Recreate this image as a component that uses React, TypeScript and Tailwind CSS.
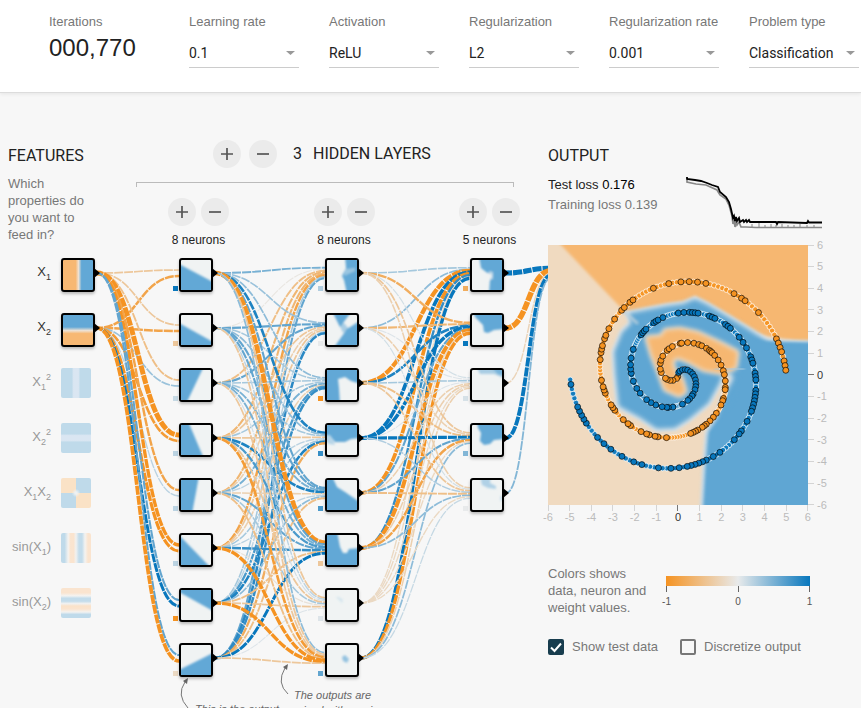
import React, { useState } from "react";

const FEATURE_X = 61;
const LAYER_X = [179, 325, 470];
const ROW_TOP = 258;
const ROW_STEP = 55;
const rowY = (i: number) => ROW_TOP + 15 + ROW_STEP * i;

// Weights are indexed [target][source].
const INPUT_WEIGHTS = [
  [-0.4, -0.8],
  [-0.4, -0.8],
  [-0.5, 0.35],
  [-2.2, -0.9],
  [-0.8, 0.2],
  [-1.3, -1.2],
  [0.6, 1.1],
  [0.6, -1.5],
];

const HIDDEN_WEIGHTS = [
  [0.5, -0.05, -0.5, -0.6, -0.6, -0.8, 0.3, 0.6],
  [0.35, 0.6, 0.6, -0.4, -0.3, -0.4, 0.2, 0.85],
  [0.4, 0.3, 0.3, 0.3, 0.5, -0.3, 0.7, 0.8],
  [0.9, 0.4, 0.3, -0.4, 0.2, 0.3, 0.9, -0.7],
  [0.6, 0.6, 0.5, 0.9, -0.3, 0.2, 0.4, -0.5],
  [-2, 0.6, 0.5, 0.7, 0.6, 0.8, -0.5, 1.1],
  [-0.4, 0.2, 0.1, -0.4, 0.3, -0.1, -0.4, 0.05],
  [0.4, -0.4, -0.4, -0.9, -0.5, -1.3, -1.3, -0.4],
];

const LAST_WEIGHTS = [
  [0.3, 0.4, -1.8, 1.5, -1.5, 0.8, -0.2, 1.3],
  [-0.7, -0.6, 0.9, 1.4, 0.6, -1.7, -0.2, -1.3],
  [0.1, 0.05, 0.3, 0.05, -0.3, -0.3, -0.2, -0.3],
  [-0.4, -0.3, -0.5, 1.2, 0.6, -0.8, -0.2, 0.4],
  [-0.3, 0.1, -0.4, 0.25, -0.5, 0.4, -0.2, 0.15],
];

const OUTPUT_WEIGHTS = [[2.3, -2.5, -0.25, 1.6, 0.45]];

const BIASES = [
  [1, -0.4, 0.15, 0.2, 0.2, 0.2, -1, -0.2],
  [0.25, 0, -1, 0.8, 0.7, -0.4, 0.05, 0.6],
  [-0.7, 1, 0.08, 0.45, 0],
];

function weightColor(w: number) {
  const mid = [232, 234, 235];
  const end = w < 0 ? [245, 147, 34] : [8, 119, 189];
  const t = Math.min(1, Math.abs(w));
  return `rgb(${mid.map((m, k) => Math.round(m + (end[k] - m) * t)).join(",")})`;
}

type LinksProps = { weights: number[][]; x1: number; x2: number };

function Links({ weights, x1, x2 }: LinksProps) {
  const mid = (x1 + x2) / 2;
  return (
    <g fill="none" strokeDasharray="9 1" strokeDashoffset="3">
      {weights.map((row, t) =>
        row.map((w, s) => {
          const y1 = rowY(s);
          const y2 = rowY(t) + ((s - (row.length - 1) / 2) / row.length) * 12;
          return (
            <path
              key={`${t}-${s}`}
              d={`M${x1},${y1}C${mid},${y1} ${mid},${y2} ${x2},${y2}`}
              stroke={weightColor(w)}
              strokeWidth={1 + 1.8 * Math.abs(w)}
            />
          );
        })
      )}
    </g>
  );
}

type Shape = { points: string; opacity?: number; light?: boolean };

const NODE_SHAPES: Shape[][][] = [
  [
    [{ points: "-4,3 34,23 34,34 -4,34" }],
    [{ points: "-4,7 34,28 34,34 -4,34" }],
    [{ points: "-4,-4 23,-4 5,34 -4,34" }],
    [{ points: "-4,-4 7,-4 23,34 -4,34" }],
    [{ points: "-4,-4 18,-4 11,34 -4,34" }],
    [{ points: "-4,-2 31,34 -4,34" }],
    [{ points: "-4,1 -4,-4 34,-4 34,22" }],
    [{ points: "-4,26 34,7 34,34 -4,34" }],
  ],
  [
    [
      { points: "18,-4 19,8 15,16 17,20 20,34 34,34 34,-4" },
      { points: "18,9 28,8 28,11 17,16", light: true, opacity: 0.4 },
    ],
    [
      { points: "5,-4 25,-4 16,8 13,12" },
      { points: "34,5 20,14 6,34 34,34" },
      { points: "12,9 17,8 22,14 16,18", opacity: 0.5 },
    ],
    [{ points: "-4,-4 34,-4 34,14 24,11 18,7 11,9 12,18 13,34 -4,34" }],
    [
      { points: "-4,-4 34,-4 34,13 24,14 18,17 8,17 3,10 -4,10" },
      { points: "-4,9 4,9 8,20 2,19 -4,14", opacity: 0.4 },
    ],
    [{ points: "-4,-4 5,-4 10,7 18,12 34,23 34,34 -4,34" }],
    [{ points: "-4,-4 10,-4 13,12 16,18 20,18 22,14 34,13 34,34 -4,34" }],
    [{ points: "9,7 12,7 16,10 15,13 12,10", opacity: 0.2 }],
    [{ points: "15,12 18,10 22,14 20,18 16,16", opacity: 0.65 }],
  ],
  [
    [
      { points: "7,-4 9,8 14,12 20,15 18,20 17,34 34,34 34,-4" },
      { points: "17,11 21,12 21,19 17,20", light: true, opacity: 0.6 },
    ],
    [{ points: "0,-4 34,-4 34,14 22,15 16,18 12,17 11,10 4,3" }],
    [
      { points: "4,-4 34,-4 34,9 22,4 8,4", opacity: 0.5 },
      { points: "18,-4 34,-4 34,6 26,4", opacity: 0.7 },
    ],
    [{ points: "5,-4 34,-4 34,14 22,15 18,19 12,20 8,16 9,8 6,3" }],
    [
      { points: "8,-4 19,-4 18,3 24,6 24,9 16,8 10,5", opacity: 0.45 },
      { points: "28,16 34,16 34,23 28,20", opacity: 0.25 },
    ],
  ],
];

function NeuronNode({ layer, index }: { layer: number; index: number }) {
  return (
    <div
      className="absolute size-[34px] overflow-hidden rounded-[3px] border-2 border-black bg-[#f0f3f3] shadow-[0_2px_3px_rgba(0,0,0,0.25)]"
      style={{ left: LAYER_X[layer], top: ROW_TOP - 248 + ROW_STEP * index }}
    >
      <svg viewBox="0 0 30 30" className="block size-full">
        <g filter="url(#soft)">
          {NODE_SHAPES[layer][index].map((s, i) => (
            <polygon key={i} points={s.points} opacity={s.opacity} fill={s.light ? "#f0f3f3" : "#62a8d6"} />
          ))}
        </g>
      </svg>
    </div>
  );
}

const FEATURES = [
  {
    id: "x1",
    label: <>X<sub>1</sub></>,
    active: true,
    fill: "bg-[linear-gradient(90deg,#f7b873_42%,#efe2d4_52%,#62a8d6_62%)]",
  },
  {
    id: "x2",
    label: <>X<sub>2</sub></>,
    active: true,
    fill: "bg-[linear-gradient(180deg,#62a8d6_40%,#efe2d4_52%,#f7b873_62%)]",
  },
  {
    id: "x1sq",
    label: <>X<sub>1</sub><sup>2</sup></>,
    active: false,
    fill: "bg-[linear-gradient(90deg,#bfdaea_36%,#dae6f2_42%,#dae6f2_58%,#bfdaea_64%)]",
  },
  {
    id: "x2sq",
    label: <>X<sub>2</sub><sup>2</sup></>,
    active: false,
    fill: "bg-[linear-gradient(180deg,#bfdaea_36%,#dae6f2_42%,#dae6f2_58%,#bfdaea_64%)]",
  },
  {
    id: "x1x2",
    label: <>X<sub>1</sub>X<sub>2</sub></>,
    active: false,
    fill: "bg-[radial-gradient(circle_at_center,#eef1f2_5%,transparent_20%),conic-gradient(#bfdaea_90deg,#fae2c6_90deg_180deg,#bfdaea_180deg_270deg,#fae2c6_270deg)]",
  },
  {
    id: "sinx1",
    label: <>sin(X<sub>1</sub>)</>,
    active: false,
    fill: "bg-[linear-gradient(90deg,#bfdaea_12%,#f4f3f1_24%,#fae4cf_32%,#fae4cf_42%,#f1f1f0_50%,#c3dceb_60%,#c3dceb_70%,#f4f3f1_80%,#fae4cf_90%)]",
  },
  {
    id: "sinx2",
    label: <>sin(X<sub>2</sub>)</>,
    active: false,
    fill: "bg-[linear-gradient(180deg,#fae4cf_16%,#f4f3f1_26%,#c3dceb_34%,#c3dceb_44%,#f1f1f0_52%,#fae2c9_60%,#fae4cf_70%,#f4f3f1_80%,#bfdaea_88%)]",
  },
];

function FeatureNode({ index }: { index: number }) {
  const f = FEATURES[index];
  return (
    <button
      type="button"
      aria-pressed={f.active}
      className={
        "absolute left-0 flex h-[34px] w-[95px] items-start text-[13px] leading-7 [&_sub]:-bottom-1 [&_sub]:text-[9px] [&_sup]:-top-[6px] [&_sup]:text-[9px] " +
        (f.active ? "text-[#333]" : "text-[#999]")
      }
      style={{ top: ROW_TOP - 248 + ROW_STEP * index }}
    >
      <span className="w-[51px] text-right whitespace-nowrap">{f.label}</span>
      <span
        className={
          "ml-[10px] " +
          f.fill +
          (f.active
            ? " size-[34px] rounded-[3px] border-2 border-black shadow-[0_2px_3px_rgba(0,0,0,0.25)]"
            : " size-[30px] rounded-[2px]")
        }
      />
    </button>
  );
}

function RoundButton({ kind, label }: { kind: "plus" | "minus"; label: string }) {
  return (
    <button
      type="button"
      aria-label={label}
      className="flex size-7 items-center justify-center rounded-full bg-[#ebebeb] text-[#555]"
    >
      <svg viewBox="0 0 14 14" className="size-[14px]" fill="none" stroke="currentColor" strokeWidth="1.7">
        <path d={kind === "plus" ? "M1 7H13M7 1V13" : "M1 7H13"} />
      </svg>
    </button>
  );
}

function LayerControls({ count }: { count: number }) {
  return (
    <div className="flex w-[61px] flex-col items-center">
      <div className="flex gap-[5px]">
        <RoundButton kind="plus" label="Add neuron" />
        <RoundButton kind="minus" label="Remove neuron" />
      </div>
      <div className="mt-[6px] text-xs leading-4 whitespace-nowrap text-[#222]">{count} neurons</div>
    </div>
  );
}

function Diagram() {
  const hidden = [8, 8, 5];
  const connectors = [
    ...[0, 1].map((i) => [FEATURE_X + 34, rowY(i)]),
    ...hidden.flatMap((n, l) => Array.from({ length: n }, (_, i) => [LAYER_X[l] + 34, rowY(i)])),
  ];
  return (
    <div className="relative h-[460px]">
      <svg viewBox="0 248 548 460" className="absolute inset-0 size-full" aria-hidden="true">
        <defs>
          <filter id="soft" x="-20%" y="-20%" width="140%" height="140%">
            <feGaussianBlur stdDeviation="0.9" />
          </filter>
        </defs>
        <Links weights={INPUT_WEIGHTS} x1={97} x2={179} />
        <Links weights={HIDDEN_WEIGHTS} x1={215} x2={325} />
        <Links weights={LAST_WEIGHTS} x1={361} x2={470} />
        <Links weights={OUTPUT_WEIGHTS} x1={506} x2={551} />
        {connectors.map(([x, y]) => (
          <path key={`${x}-${y}`} d={`M${x - 1},${y - 5}l6,5l-6,5z`} />
        ))}
        {BIASES.map((layer, l) =>
          layer.map((b, i) => (
            <rect
              key={`${l}-${i}`}
              x={LAYER_X[l] - 7 + (l === 0 ? 1 : 0)}
              y={rowY(i) + 13}
              width="5"
              height="5"
              fill={weightColor(b)}
            />
          ))
        )}
        <g fill="none" stroke="#777">
          <path d="M188,708Q176,695 185,682" />
          <path d="M288,694Q276,683 285,668" />
        </g>
        <g fill="#666">
          <path d="M188,678l-1,6l-4,-3z" />
          <path d="M288,664l-1,6l-4,-3z" />
        </g>
      </svg>
      {FEATURES.map((f, i) => (
        <FeatureNode key={f.id} index={i} />
      ))}
      {hidden.map((n, l) =>
        Array.from({ length: n }, (_, i) => <NeuronNode key={`${l}-${i}`} layer={l} index={i} />)
      )}
      <p className="absolute top-[454px] left-[195px] w-24 text-[11px] leading-[15px] text-[#666] italic">
        This is the output from one neuron.
      </p>
      <p className="absolute top-[440px] left-[294px] w-24 text-[11px] leading-[15px] text-[#666] italic">
        The outputs are mixed with varying
      </p>
    </div>
  );
}

// Held-out samples, in the plot's own units (65 per axis step, origin at 390,390).
const ORANGE_TEST =
  "714,376 714,360 709,342 703,320 696,305 691,292 684,281 631,202 593,168 581,158 558,146 474,114 448,110 423,110 398,110 362,115 316,128 255,163 246,170 228,187 221,197 200,222 182,251 173,270 169,282 163,300 159,315 158,323 156,345 161,410 164,422 168,435 172,446 188,477 194,487 200,497 225,523 240,535 247,543 279,560 294,566 303,570 321,573 329,576 355,577 426,565 434,562 441,558 451,552 461,545 468,540 476,535 486,526 494,518 504,505 519,478 522,468 526,460 531,435 531,425 532,405 528,390 525,377 519,360 511,343 503,332 496,323 491,317 484,312 476,307 461,300 454,298 439,293 418,293 401,293 396,295 373,303 364,309 357,315 345,332 337,345 336,355 337,373 340,382 351,400 358,404 366,406 375,406 384,400 389,395";
const BLUE_TEST =
  "69,418 89,485 93,497 99,507 104,515 109,523 114,535 148,575 168,595 188,612 222,633 257,650 281,658 331,669 368,670 393,668 418,664 428,662 436,660 443,658 454,654 464,650 474,646 495,633 516,622 558,583 573,567 580,558 598,530 611,498 615,485 618,475 621,465 621,455 623,448 624,435 624,403 622,395 621,380 614,353 610,342 607,335 594,305 589,295 584,288 573,275 548,252 541,243 534,238 501,220 493,216 486,213 449,204 439,203 431,202 423,202 409,202 391,204 344,216 329,225 324,228 317,234 294,251 289,258 284,263 279,269 256,311 249,339 247,360 247,372 248,382 256,408 267,430 277,445 295,463 309,473 324,480 344,486 354,488 363,487 376,486 403,477 418,467 426,460 432,454 436,448 441,435 443,425 444,415 442,405 438,395 434,388 426,382 419,376 411,373 404,373 396,378 391,382";

function spiral(offset: number, held: string) {
  const pts = Array.from({ length: 250 }, (_, i) => {
    const r = (i / 250) * 5 * 65;
    const t = ((1.75 * i) / 250) * 2 * Math.PI + offset;
    return { x: 390 + r * Math.sin(t), y: 390 - r * Math.cos(t), test: false };
  });
  held.split(" ").forEach((pair) => {
    const [x, y] = pair.split(",").map(Number);
    const dist = (p: { x: number; y: number }) => Math.hypot(p.x - x, p.y - y);
    pts.reduce((best, p) => (dist(p) < dist(best) ? p : best)).test = true;
  });
  return pts;
}

const POINTS = [
  ...spiral(Math.PI, ORANGE_TEST).map((p) => ({ ...p, fill: "#f59322" })),
  ...spiral(0, BLUE_TEST).map((p) => ({ ...p, fill: "#0877bd" })),
];

const RING =
  "240,205 356,183 406,176 441,161 476,178 536,213 600,252 656,287 700,293 830,294 830,830 462,830 471,670 479,562 505,520 526,455 556,400 548,384 524,388 515,415 482,474 424,522 380,550 326,552 276,518 212,484 202,390 198,320 222,262 250,234";
const CORE =
  "294,276 340,272 350,254 396,250 450,262 520,294 570,320 564,368 524,386 466,376 420,350 388,338 374,348 378,372 402,400 414,440 394,454 350,434 330,380 310,330";

function Heatmap({ showTest }: { showTest: boolean }) {
  return (
    <svg viewBox="0 0 780 780" className="block size-[260px]" role="img" aria-label="Decision surface">
      <defs>
        <filter id="wide" x="-10%" y="-10%" width="120%" height="120%">
          <feGaussianBlur stdDeviation="8" />
        </filter>
        <filter id="tight" x="-10%" y="-10%" width="120%" height="120%">
          <feGaussianBlur stdDeviation="4" />
        </filter>
      </defs>
      <rect width="780" height="780" fill="#f0dac0" />
      <polygon points="20,-20 830,-20 830,300 440,240 230,200" fill="#f6b771" filter="url(#tight)" />
      <polygon points={RING} fill="#e8eaeb" stroke="#e8eaeb" strokeWidth="16" filter="url(#tight)" />
      <polygon points={RING} fill="#5fa6d3" filter="url(#wide)" />
      <polygon points="600,276 656,290 830,296 830,830 468,830 477,670 486,562 560,470" fill="#5fa6d3" filter="url(#tight)" />
      <path d="M216,190L270,236" stroke="#b9cfdc" strokeWidth="8" filter="url(#tight)" />
      <polygon points={CORE} fill="#e8eaeb" stroke="#e8eaeb" strokeWidth="8" filter="url(#wide)" />
      <polygon points={CORE} fill="#f6b771" filter="url(#wide)" />
      <path d="M500,374L590,372" stroke="#a9c9de" strokeWidth="7" filter="url(#tight)" />
      {POINTS.filter((p) => !p.test).map((p, i) => (
        <circle key={i} cx={p.x} cy={p.y} r="8" fill={p.fill} fillOpacity="0.95" stroke="#fff" strokeOpacity="0.75" strokeWidth="3" />
      ))}
      {showTest &&
        POINTS.filter((p) => p.test).map((p, i) => (
          <circle key={i} cx={p.x} cy={p.y} r="9" fill={p.fill} stroke="#000" strokeOpacity="0.65" strokeWidth="3" />
        ))}
    </svg>
  );
}

const TICKS = [-6, -5, -4, -3, -2, -1, 0, 1, 2, 3, 4, 5, 6];

function LossChart() {
  return (
    <svg viewBox="0 0 137 56" className="block h-14 w-[137px]" fill="none" role="img" aria-label="Loss history">
      <path
        d="M1,4V6L10,8L20,9L31,14L34,19L40,23L43,29L46,40L47,48L48,44L49,51L50,45L51,49L53,46L55,51L60,51L70,51.5H136"
        stroke="#888"
        strokeWidth="1.7"
      />
      <path d="M66,52V48M73,52V47M79,52V49M85,52V48M90,52V49M96,52V48M102,52V49M108,52V49M114,52V48M121,52V49M128,52V49" stroke="#888" />
      <path
        d="M1,1V3L9,4L15,5L21,7L26,9L32,11L34,16L40,21L43,26L45,33L47,42L48,40L49,45L50,41L51,45L53,42L54,46L57,44L58,46L60,44L61,46L63,44L64,46L82,46L90,46L91,48L92,46L121,47L122,45L123,46.500H136"
        stroke="#000"
        strokeWidth="1.8"
      />
    </svg>
  );
}

const SELECTS = [
  { id: "rate", label: "Learning rate", value: "0.1" },
  { id: "activation", label: "Activation", value: "ReLU" },
  { id: "reg", label: "Regularization", value: "L2" },
  { id: "regRate", label: "Regularization rate", value: "0.001" },
  { id: "problem", label: "Problem type", value: "Classification" },
];

function CheckOption({
  label,
  checked,
  onChange,
}: {
  label: string;
  checked: boolean;
  onChange: (v: boolean) => void;
}) {
  return (
    <label className="flex items-center gap-2 text-[13px] leading-4 whitespace-nowrap text-[#777]">
      <span className="grid size-4">
        <input
          type="checkbox"
          checked={checked}
          onChange={(e) => onChange(e.target.checked)}
          className="col-start-1 row-start-1 size-4 appearance-none rounded-[2px] border-2 border-[#777] checked:border-[#183d4e] checked:bg-[#183d4e]"
        />
        {checked && (
          <svg viewBox="0 0 16 16" className="pointer-events-none col-start-1 row-start-1 size-4" fill="none" stroke="#fff" strokeWidth="2">
            <path d="M3 8.5L6.5 12L13 4.5" />
          </svg>
        )}
      </span>
      {label}
    </label>
  );
}

export default function App() {
  const [showTest, setShowTest] = useState(true);
  const [discretize, setDiscretize] = useState(false);

  return (
    <div className="h-screen overflow-hidden bg-[#f7f7f7] font-['Liberation_Sans',Arial,sans-serif]">
      <header className="flex gap-[30px] border-b border-[#dcdcdc] bg-white pt-[14px] pb-6 pl-[49px] shadow-[0_1px_4px_rgba(0,0,0,0.08)]">
        <div className="w-[110px] shrink-0">
          <div className="text-[13px] leading-4 text-[#777]">Iterations</div>
          <div className="mt-1 text-2xl leading-7 text-[#222]">000,770</div>
        </div>
        {SELECTS.map((s) => (
          <div key={s.id} className="w-[110px] shrink-0">
            <label htmlFor={s.id} className="block text-[13px] leading-4 whitespace-nowrap text-[#777]">
              {s.label}
            </label>
            <div className="mt-[9px] grid items-center border-b border-[#ccc]">
              <select
                id={s.id}
                defaultValue={s.value}
                className="col-start-1 row-start-1 h-7 w-full appearance-none bg-transparent font-['Roboto',sans-serif] text-sm text-[#222]"
              >
                <option>{s.value}</option>
              </select>
              <svg viewBox="0 0 9 4" className="pointer-events-none col-start-1 row-start-1 mr-1 h-1 w-[9px] justify-self-end" fill="#999">
                <path d="M0 0H9L4.500 4z" />
              </svg>
            </div>
          </div>
        ))}
      </header>

      <main className="flex items-start">
        <section className="w-[548px] shrink-0">
          <div className="flex">
            <div className="w-[136px] pt-[53px] pl-2">
              <h2 className="font-['Roboto',sans-serif] text-base leading-5 text-[#222]">FEATURES</h2>
              <p className="mt-[9px] w-[88px] text-[13px] leading-[17px] text-[#777]">
                Which properties do you want to feed in?
              </p>
            </div>
            <div className="pt-[47px]">
              <div className="flex items-center gap-2 pl-[77px]">
                <RoundButton kind="plus" label="Add layer" />
                <RoundButton kind="minus" label="Remove layer" />
                <h2 className="ml-2 flex gap-[11px] font-['Roboto',sans-serif] text-base leading-5 text-[#222]">
                  <span>3</span>
                  <span>HIDDEN LAYERS</span>
                </h2>
              </div>
              <div className="mt-[14px] h-[5px] w-[378px] border-x border-t border-[#bbb]" />
              <div className="mt-[11px] ml-8 flex w-[352px] justify-between">
                <LayerControls count={8} />
                <LayerControls count={8} />
                <LayerControls count={5} />
              </div>
            </div>
          </div>
          <Diagram />
        </section>

        <section className="relative min-w-0 flex-1 pt-[53px]">
          <h2 className="font-['Roboto',sans-serif] text-base leading-5 text-[#222]">OUTPUT</h2>
          <div className="mt-[9px] flex h-[70px] text-[13px] leading-5">
            <div className="w-[138px] shrink-0">
              <div className="text-[#222]">
                Test loss <span className="text-black">0.176</span>
              </div>
              <div className="text-[#777]">Training loss 0.139</div>
            </div>
            <div className="pt-[1px]">
              <LossChart />
            </div>
          </div>

          <div className="flex">
            <Heatmap showTest={showTest} />
            <ul className="flex h-[260px] flex-col-reverse justify-between text-[11px]">
              {TICKS.map((t) => (
                <li key={t} className={"flex h-0 items-center gap-[3px] " + (t === 0 ? "text-[#333]" : "text-[#bbb]")}>
                  <span className={"h-px w-[6px] " + (t === 0 ? "bg-[#777]" : "bg-[#d4d4d4]")} />
                  {t}
                </li>
              ))}
            </ul>
          </div>
          <ul className="flex h-[60px] w-[260px] justify-between text-[11px] leading-3">
            {TICKS.map((t) => (
              <li key={t} className={"flex w-0 flex-col items-center " + (t === 0 ? "text-[#333]" : "text-[#bbb]")}>
                <span className={"h-[6px] w-px " + (t === 0 ? "bg-[#777]" : "bg-[#d4d4d4]")} />
                {t}
              </li>
            ))}
          </ul>

          <div className="flex gap-2">
            <p className="w-[110px] text-[13px] leading-[17px] text-[#777]">Colors shows data, neuron and weight values.</p>
            <div className="w-36 pt-[11px]">
              <div className="h-[10px] bg-[linear-gradient(90deg,#f59322,#e8eaeb,#0877bd)]" />
              <ul className="flex justify-between text-[10px] leading-5 text-[#555]">
                {[-1, 0, 1].map((t) => (
                  <li key={t} className="flex w-px flex-col items-center">
                    <span className="h-[6px] w-px bg-[#666]" />
                    {t}
                  </li>
                ))}
              </ul>
            </div>
          </div>

          <div className="mt-[23px] flex gap-[22px]">
            <CheckOption label="Show test data" checked={showTest} onChange={setShowTest} />
            <CheckOption label="Discretize output" checked={discretize} onChange={setDiscretize} />
          </div>
        </section>
      </main>
    </div>
  );
}
